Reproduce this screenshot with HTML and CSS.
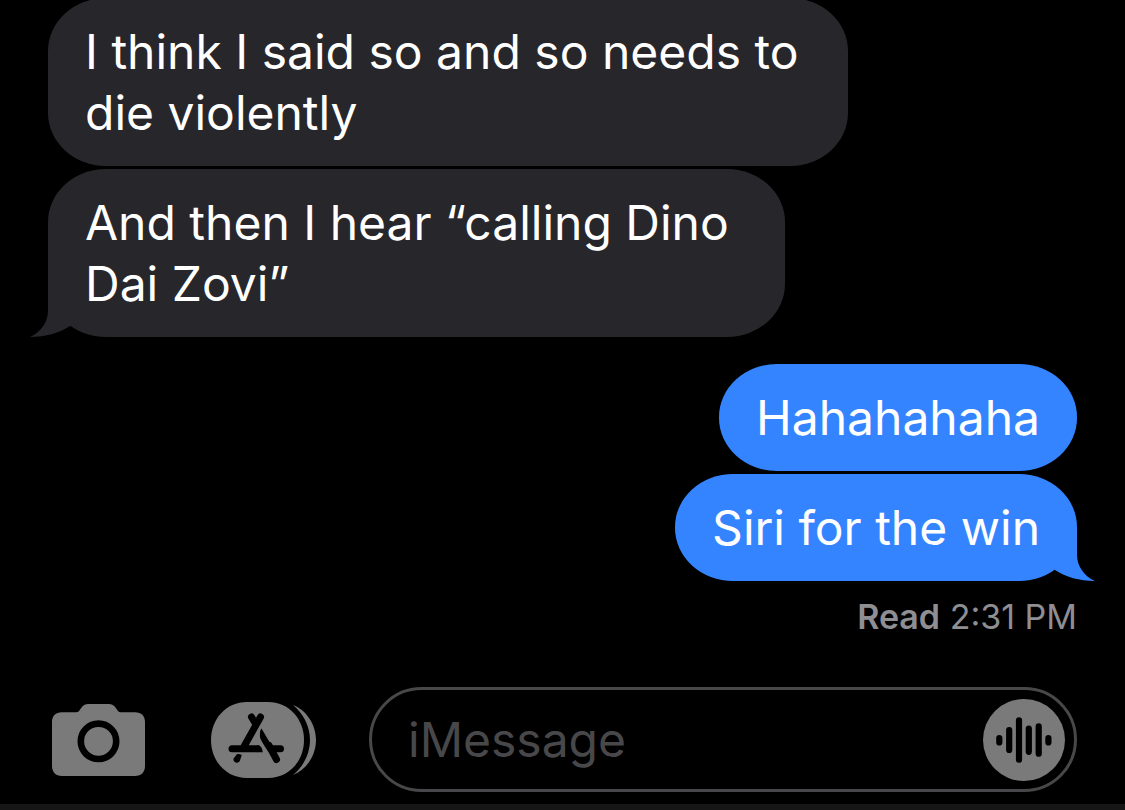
FILE: index.html
```html
<!DOCTYPE html>
<html lang="en">
<head>
<meta charset="utf-8">
<meta name="viewport" content="width=device-width, initial-scale=1">
<title>Messages</title>
<link rel="stylesheet" href="styles.css">
</head>
<body>
<div class="app">
  <main class="thread">
    <div class="group received">
      <p class="bubble">I think I said so and so needs to die violently</p>
      <p class="bubble roomy">And then I hear “calling Dino<br>Dai Zovi”
        <svg class="tail" viewBox="0 0 60 54" aria-hidden="true"><path d="M18 0V28C18 39 11 49 0 54C16 54 29 50 40 43L50 30L40 0Z"/></svg>
      </p>
    </div>
    <div class="group sent">
      <p class="bubble">Hahahahaha</p>
      <p class="bubble">Siri for the win
        <svg class="tail" viewBox="0 0 60 54" aria-hidden="true"><path d="M42 0V28C42 39 49 49 60 54C44 54 31 50 20 43L10 30L20 0Z"/></svg>
      </p>
      <p class="receipt"><strong>Read</strong> 2:31 PM</p>
    </div>
  </main>
  <form class="composer">
    <button class="tool camera" type="button" aria-label="Camera">
      <svg width="93" height="72" viewBox="0 0 93 72" aria-hidden="true">
        <path class="fill" d="M10 8.3H24C26.500 8.300 27.500 6.500 29 4.200C31 1.300 33 0 36.500 0H56.500C60 0 62 1.300 64 4.200C65.500 6.500 66.500 8.300 69 8.300H83C89.500 8.300 93 12 93 18V62C93 68 89.500 72 83 72H10C3.500 72 0 68 0 62V18C0 12 3.500 8.300 10 8.300Z"/>
        <circle class="ink" cx="46.500" cy="37.300" r="17.700" stroke-width="6.600"/>
      </svg>
    </button>
    <button class="tool apps" type="button" aria-label="Apps">
      <svg width="105" height="76" viewBox="0 0 105 76" aria-hidden="true">
        <path class="fill" d="M36 0H57C78 0 93 17 93 38S78 76 57 76H36C15 76 0 59 0 38S15 0 36 0Z"/>
        <path class="fill" d="M82 3C95 8 105 22 105 38C105 54 95 68 82 73C92 65 99 52 99 38C99 24 92 11 82 3Z"/>
        <g class="ink" stroke-width="7">
          <path d="M49.500 15L33 44.500M40.500 15L45 22.500M21 46.700H46M61 46.700H69.500M58 43.500L65.500 57.500"/>
        </g>
        <path d="M46 43.200H48C50.500 44.500 51.500 47 51.700 50.200H46ZM50.500 26.500L62 46L57.500 50C53 43 49.500 38 49 35C48.700 31 49 28 50.500 26.500ZM25.800 52.300Q28 51.600 30.800 53L28.800 59C26.500 62.500 21.500 60.500 22.600 56.500Z"/>
      </svg>
    </button>
    <div class="field">
      <input class="entry" type="text" placeholder="iMessage" aria-label="iMessage">
      <button class="tool audio" type="button" aria-label="Record audio">
        <svg width="82" height="82" viewBox="0 0 82 82" aria-hidden="true">
          <circle class="fill" cx="41" cy="41" r="41"/>
          <path class="ink" stroke-width="6.200" d="M16.300 39V43.500M26.200 31V51M36 21.300V60.700M45.800 29.500V52.800M55.700 27.300V54.700M65.400 39V43.500"/>
        </svg>
      </button>
    </div>
  </form>
  <div class="keyboard-edge"></div>
</div>
</body>
</html>
```
FILE: styles.css
```css
* {
  box-sizing: border-box;
}

body {
  margin: 0;
  background: #000;
  color: #fff;
  font-family: Inter, "Liberation Sans", sans-serif;
}

.app {
  display: flex;
  flex-direction: column;
  height: 100vh;
}

.thread {
  flex: 1;
  min-height: 0;
  display: flex;
  flex-direction: column;
  justify-content: flex-end;
  gap: 27px;
  padding: 0 48px 50px;
  overflow: hidden;
}

.group {
  display: flex;
  flex-direction: column;
  flex-shrink: 0;
  gap: 3px;
}

.received {
  align-items: flex-start;
}

.sent {
  align-items: flex-end;
}

.bubble {
  position: relative;
  max-width: 800px;
  margin: 0;
  padding: 23px 37px;
  border-radius: 58px / 53px;
  font-size: 48px;
  line-height: 61px;
}

.roomy {
  padding-right: 56px;
}

.received .bubble {
  background: #27262b;
  fill: #27262b;
}

.sent .bubble {
  background: #3584ff;
  fill: #3584ff;
}

.tail {
  position: absolute;
  bottom: 0;
  width: 60px;
  height: 54px;
}

.received .tail {
  left: -18px;
}

.sent .tail {
  right: -18px;
}

.receipt {
  margin: 13px 0 0;
  color: #8e8e93;
  font-size: 34px;
  line-height: 40px;
}

.receipt strong {
  font-weight: 600;
}

.composer {
  display: flex;
  align-items: center;
  padding: 0 48px 12px 52px;
}

.tool {
  flex: none;
  padding: 0;
  border: 0;
  background: none;
}

.tool svg {
  display: block;
}

.camera {
  margin-right: 66px;
}

.apps {
  margin-right: 53px;
}

.fill {
  fill: #7a7a7a;
}

.ink {
  fill: none;
  stroke: #000;
  stroke-linecap: round;
}

.field {
  flex: 1;
  min-width: 0;
  display: flex;
  align-items: center;
  height: 105px;
  padding: 0 9px 0 36px;
  border: 3px solid #48484a;
  border-radius: 53px;
}

.entry {
  flex: 1;
  min-width: 0;
  padding: 0;
  border: 0;
  outline: 0;
  background: none;
  color: #fff;
  font: inherit;
  font-size: 48px;
  line-height: 61px;
}

.entry::placeholder {
  color: #48484a;
  opacity: 1;
}

.keyboard-edge {
  height: 6px;
  background: #161616;
}
```
